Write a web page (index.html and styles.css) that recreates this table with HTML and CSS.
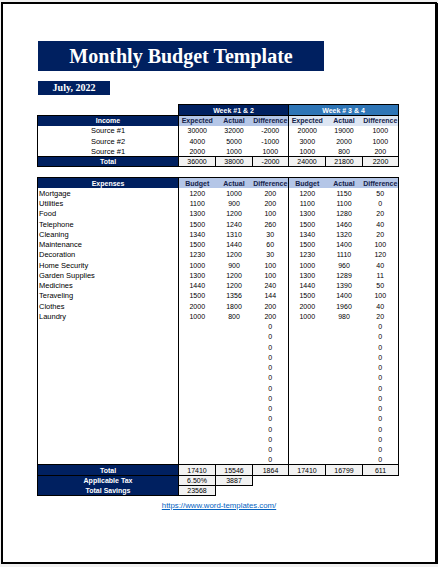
FILE: index.html
```html
<!DOCTYPE html>
<html lang="en">
<head>
  <meta charset="UTF-8" />
  <meta name="viewport" content="width=device-width, initial-scale=1.0"/>
  <title>Monthly Budget Template</title>
  <link rel="stylesheet" href="styles.css">
</head>
<body>

  <div class="page">
    <div class="title">Monthly Budget Template</div>
    <div class="month">July, 2022</div>

    <table class="sheet income">
      <colgroup>
        <col class="c-label"><col class="c-num"><col class="c-num"><col class="c-diff">
        <col class="c-num"><col class="c-num"><col class="c-diff">
      </colgroup>
      <tr class="week-row">
        <td class="blank"></td>
        <th colspan="3" class="week week-a">Week #1 &amp; 2</th>
        <th colspan="3" class="week week-b">Week # 3 &amp; 4</th>
      </tr>
      <tr class="head-row">
        <th class="label-head">Income</th>
        <th class="sub">Expected</th><th class="sub">Actual</th><th class="sub end">Difference</th>
        <th class="sub pale">Expected</th><th class="sub pale">Actual</th><th class="sub pale end">Difference</th>
      </tr>
      <tr><td class="label center">Source #1</td><td>30000</td><td>32000</td><td class="end">-2000</td><td>20000</td><td>19000</td><td class="end">1000</td></tr>
      <tr><td class="label center">Source #2</td><td>4000</td><td>5000</td><td class="end">-1000</td><td>3000</td><td>2000</td><td class="end">1000</td></tr>
      <tr><td class="label center">Source #1</td><td>2000</td><td>1000</td><td class="end">1000</td><td>1000</td><td>800</td><td class="end">200</td></tr>
      <tr class="total-row">
        <th class="label-head">Total</th>
        <td class="box">36000</td><td class="box">38000</td><td class="box">-2000</td>
        <td class="box">24000</td><td class="box">21800</td><td class="box">2200</td>
      </tr>
    </table>

    <table class="sheet expenses">
      <colgroup>
        <col class="c-label"><col class="c-num"><col class="c-num"><col class="c-diff">
        <col class="c-num"><col class="c-num"><col class="c-diff">
      </colgroup>
      <tr class="head-row">
        <th class="label-head">Expenses</th>
        <th class="sub">Budget</th><th class="sub">Actual</th><th class="sub end">Difference</th>
        <th class="sub">Budget</th><th class="sub">Actual</th><th class="sub end">Difference</th>
      </tr>
      <tr><td class="label">Mortgage</td><td>1200</td><td>1000</td><td class="end">200</td><td>1200</td><td>1150</td><td class="end">50</td></tr>
      <tr><td class="label">Utilities</td><td>1100</td><td>900</td><td class="end">200</td><td>1100</td><td>1100</td><td class="end">0</td></tr>
      <tr><td class="label">Food</td><td>1300</td><td>1200</td><td class="end">100</td><td>1300</td><td>1280</td><td class="end">20</td></tr>
      <tr><td class="label">Telephone</td><td>1500</td><td>1240</td><td class="end">260</td><td>1500</td><td>1460</td><td class="end">40</td></tr>
      <tr><td class="label">Cleaning</td><td>1340</td><td>1310</td><td class="end">30</td><td>1340</td><td>1320</td><td class="end">20</td></tr>
      <tr><td class="label">Maintenance</td><td>1500</td><td>1440</td><td class="end">60</td><td>1500</td><td>1400</td><td class="end">100</td></tr>
      <tr><td class="label">Decoration</td><td>1230</td><td>1200</td><td class="end">30</td><td>1230</td><td>1110</td><td class="end">120</td></tr>
      <tr><td class="label">Home Security</td><td>1000</td><td>900</td><td class="end">100</td><td>1000</td><td>960</td><td class="end">40</td></tr>
      <tr><td class="label">Garden Supplies</td><td>1300</td><td>1200</td><td class="end">100</td><td>1300</td><td>1289</td><td class="end">11</td></tr>
      <tr><td class="label">Medicines</td><td>1440</td><td>1200</td><td class="end">240</td><td>1440</td><td>1390</td><td class="end">50</td></tr>
      <tr><td class="label">Teraveling</td><td>1500</td><td>1356</td><td class="end">144</td><td>1500</td><td>1400</td><td class="end">100</td></tr>
      <tr><td class="label">Clothes</td><td>2000</td><td>1800</td><td class="end">200</td><td>2000</td><td>1960</td><td class="end">40</td></tr>
      <tr><td class="label">Laundry</td><td>1000</td><td>800</td><td class="end">200</td><td>1000</td><td>980</td><td class="end">20</td></tr>
      <tr><td class="label"></td><td></td><td></td><td class="end">0</td><td></td><td></td><td class="end">0</td></tr>
      <tr><td class="label"></td><td></td><td></td><td class="end">0</td><td></td><td></td><td class="end">0</td></tr>
      <tr><td class="label"></td><td></td><td></td><td class="end">0</td><td></td><td></td><td class="end">0</td></tr>
      <tr><td class="label"></td><td></td><td></td><td class="end">0</td><td></td><td></td><td class="end">0</td></tr>
      <tr><td class="label"></td><td></td><td></td><td class="end">0</td><td></td><td></td><td class="end">0</td></tr>
      <tr><td class="label"></td><td></td><td></td><td class="end">0</td><td></td><td></td><td class="end">0</td></tr>
      <tr><td class="label"></td><td></td><td></td><td class="end">0</td><td></td><td></td><td class="end">0</td></tr>
      <tr><td class="label"></td><td></td><td></td><td class="end">0</td><td></td><td></td><td class="end">0</td></tr>
      <tr><td class="label"></td><td></td><td></td><td class="end">0</td><td></td><td></td><td class="end">0</td></tr>
      <tr><td class="label"></td><td></td><td></td><td class="end">0</td><td></td><td></td><td class="end">0</td></tr>
      <tr><td class="label"></td><td></td><td></td><td class="end">0</td><td></td><td></td><td class="end">0</td></tr>
      <tr><td class="label"></td><td></td><td></td><td class="end">0</td><td></td><td></td><td class="end">0</td></tr>
      <tr><td class="label"></td><td></td><td></td><td class="end">0</td><td></td><td></td><td class="end">0</td></tr>
      <tr><td class="label"></td><td></td><td></td><td class="end">0</td><td></td><td></td><td class="end">0</td></tr>
      <tr class="total-row">
        <th class="label-head">Total</th>
        <td class="box">17410</td><td class="box">15546</td><td class="box">1864</td>
        <td class="box">17410</td><td class="box">16799</td><td class="box">611</td>
      </tr>
      <tr class="foot-row">
        <th class="label-head">Applicable Tax</th>
        <td class="box">6.50%</td><td class="box">3887</td><td class="none" colspan="4"></td>
      </tr>
      <tr class="foot-row">
        <th class="label-head">Total Savings</th>
        <td class="box">23568</td><td class="none" colspan="5"></td>
      </tr>
    </table>

    <a class="site-link" href="https://www.word-templates.com/">https://www.word-templates.com/</a>
  </div>

</body>
</html>
```

FILE: styles.css
```css
body {
  margin: 0;
  background: #f0f0f0;
  font-family: "Liberation Sans", Arial, sans-serif;
  color: #000;
}

.page {
  box-sizing: border-box;
  width: 436px;
  height: 562px;
  margin: 2px 0 0 1px;
  padding-top: 37px;
  background: #fff;
  border: 2px solid #000;
  box-shadow: 1px 1px 0 #000;
}

.title {
  width: 286px;
  height: 30px;
  margin-left: 35px;
  background: #002060;
  color: #fff;
  font-family: "Liberation Serif", serif;
  font-weight: bold;
  font-size: 20px;
  line-height: 30px;
  text-align: center;
}

.month {
  width: 72px;
  height: 14px;
  margin: 10px 0 0 35px;
  background: #002060;
  color: #fff;
  font-family: "Liberation Serif", serif;
  font-weight: bold;
  font-size: 10px;
  line-height: 14px;
  text-align: center;
}

.sheet {
  border-collapse: collapse;
  table-layout: fixed;
  width: 360px;
  margin-left: 34px;
}

.income {
  margin-top: 9px;
}

.expenses {
  margin-top: 10px;
}

.c-label { width: 141px; }
.c-num { width: 37px; }
.c-diff { width: 36px; }

.sheet td,
.sheet th {
  padding: 0;
  font-size: 7px;
  font-weight: normal;
  text-align: center;
  white-space: nowrap;
  overflow: hidden;
}

.sheet tr {
  height: 10.3px;
}

.expenses tr {
  height: 10.25px;
}

.expenses .foot-row {
  height: 10.2px;
}

.income .week-row {
  height: 11px;
}

.sheet th.week {
  color: #fff;
  font-weight: bold;
  border: 1px solid #000;
}

.week-a { background: #002060; }
.week-b { background: #2e75b6; }

.sheet th.label-head {
  background: #002060;
  color: #fff;
  font-weight: bold;
  border-left: 1px solid #000;
  border-right: 1px solid #000;
}

.head-row th {
  border-top: 1px solid #000;
}

.sheet th.sub {
  background: #b4c6e7;
  color: #14224a;
  font-weight: bold;
}

.sheet th.sub.pale {
  background: #dde6f3;
}

.sheet .end {
  border-right: 1px solid #000;
}

.sheet td.label {
  text-align: left;
  font-size: 7.5px;
  padding-left: 1px;
  border-left: 1px solid #000;
  border-right: 1px solid #000;
}

.sheet td.label.center {
  text-align: center;
  padding-left: 0;
}

.sheet td.box {
  background: #f2f2f2;
  border: 1px solid #000;
}

.total-row th,
.total-row td {
  border-top: 1px solid #000;
  border-bottom: 1px solid #000;
}

.foot-row:last-child th {
  border-bottom: 1px solid #000;
}

.site-link {
  display: block;
  margin-top: 5px;
  text-align: center;
  font-size: 7.8px;
  color: #0563c1;
}
```
